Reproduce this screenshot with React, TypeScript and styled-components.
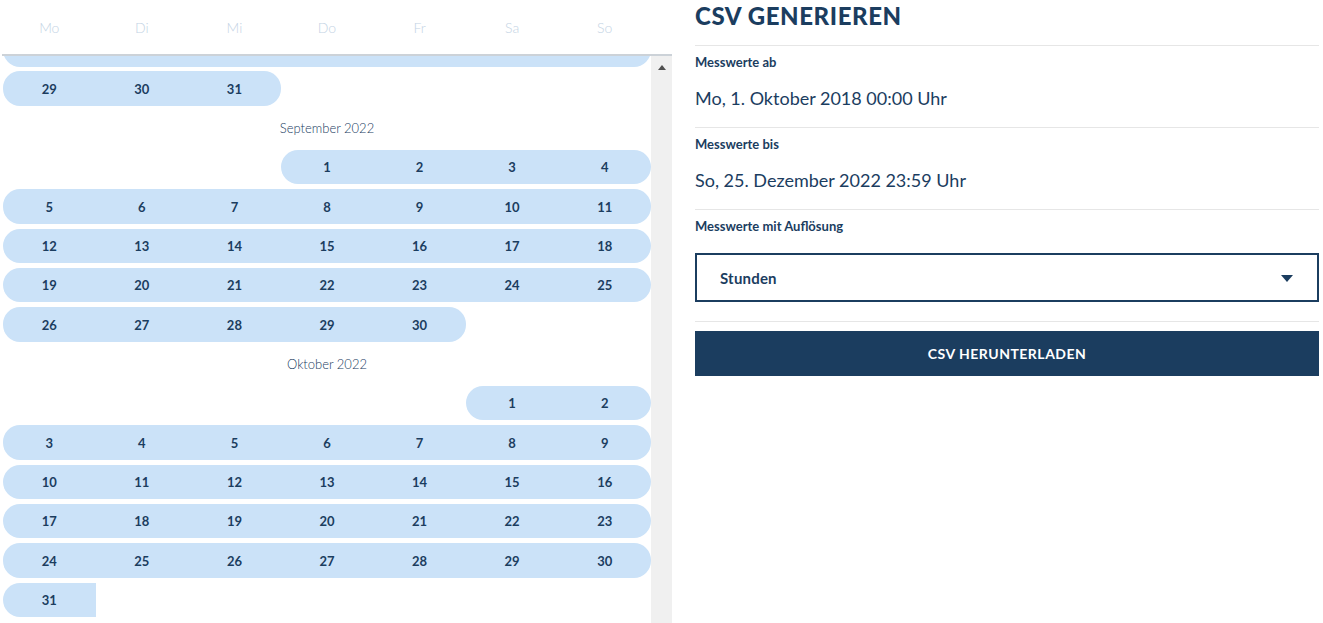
import { createGlobalStyle } from "styled-components";
import styled from "styled-components";

const NAVY = "#1b3d5f";
const PILL = "#cbe2f8";

const GlobalStyle = createGlobalStyle`
    html, body {
        margin: 0;
        padding: 0;
        background: #ffffff;
        font-family: "Lato", "Liberation Sans", sans-serif;
        color: ${NAVY};
    }
    * {
        box-sizing: border-box;
    }
`;

const Page = styled.div`
    display: flex;
    width: 1323px;
    height: 623px;
    overflow: hidden;
`;

const LeftPanel = styled.div`
    width: 672px;
    flex-shrink: 0;
    display: flex;
    flex-direction: column;
`;

const WeekdayHeader = styled.div`
    height: 56px;
    margin-left: 2px;
    padding-left: 1px;
    padding-right: 21px;
    border-bottom: solid 2px #ccd2d8;
    display: grid;
    grid-template-columns: repeat(7, 1fr);
    align-items: center;
`;

const WeekdayLabel = styled.div`
    text-align: center;
    font-size: 14px;
    font-weight: 300;
    color: #c3d3e4;
`;

const CalendarBody = styled.div`
    flex: 1;
    display: flex;
    min-height: 0;
`;

const CalendarList = styled.div`
    width: 651px;
    overflow: hidden;
    padding-left: 3px;
`;

/* the list is scrolled a little: the week 22-28 is mostly hidden */
const CalendarInner = styled.div`
    margin-top: -24px;
`;

const Scrollbar = styled.div`
    width: 21px;
    background: #f0f0f0;
    display: flex;
    justify-content: center;
    padding-top: 9px;
`;

const ArrowUp = styled.div`
    width: 0;
    height: 0;
    border-left: 4.5px solid transparent;
    border-right: 4.5px solid transparent;
    border-bottom: 5px solid #505050;
`;

const WeekRow = styled.div`
    height: 34.5px;
    margin-bottom: 4.83px;
    display: grid;
    grid-template-columns: repeat(7, 1fr);
`;

const Pill = styled.div<{ $start: number; $span: number; $openEnd?: boolean }>`
    grid-column: ${(p) => `${p.$start} / span ${p.$span}`};
    background: ${PILL};
    border-radius: ${(p) => (p.$openEnd ? "17px 0 0 17px" : "17px")};
    display: grid;
    grid-template-columns: repeat(${(p) => p.$span}, 1fr);
    align-items: center;
`;

const Day = styled.div`
    text-align: center;
    font-size: 13px;
    font-weight: 700;
    color: ${NAVY};
`;

const MonthTitle = styled.div`
    height: 34.5px;
    margin-bottom: 4.83px;
    display: flex;
    align-items: center;
    justify-content: center;
    font-size: 13px;
    font-weight: 300;
    color: ${NAVY};
`;

const RightPanel = styled.div`
    flex: 1;
    margin-left: 23px;
    margin-right: 4px;
    display: flex;
    flex-direction: column;
`;

const Title = styled.h1`
    margin: 0;
    padding-top: 1px;
    height: 46px;
    font-size: 24px;
    line-height: 30px;
    font-weight: 900;
    letter-spacing: 0.6px;
    color: ${NAVY};
    border-bottom: solid 1px #e6e6e6;
`;

const Field = styled.div`
    padding-top: 8px;
    padding-bottom: 17px;
    border-bottom: solid 1px #e6e6e6;
`;

const FieldLabel = styled.div`
    font-size: 13px;
    line-height: 16px;
    font-weight: 700;
    color: ${NAVY};
`;

const FieldValue = styled.div`
    margin-top: 16px;
    font-size: 18px;
    line-height: 24px;
    font-weight: 400;
    color: ${NAVY};
`;

const SelectBox = styled.div`
    margin-top: 19px;
    height: 49px;
    border: solid 2px ${NAVY};
    display: flex;
    align-items: center;
    justify-content: space-between;
    padding: 0 24px 0 23px;
    font-size: 15px;
    font-weight: 700;
    letter-spacing: 0.2px;
    color: ${NAVY};
`;

const Caret = styled.div`
    width: 0;
    height: 0;
    border-left: 6px solid transparent;
    border-right: 6px solid transparent;
    border-top: 7px solid ${NAVY};
    margin-top: 1px;
`;

const SelectField = styled(Field)`
    padding-bottom: 19px;
`;

const DownloadButton = styled.button`
    margin-top: 9px;
    height: 45px;
    border: none;
    background: ${NAVY};
    color: #ffffff;
    font-family: "Lato", "Liberation Sans", sans-serif;
    font-size: 14px;
    font-weight: 700;
    letter-spacing: 0.5px;
    cursor: pointer;
`;

const WEEKDAYS = ["Mo", "Di", "Mi", "Do", "Fr", "Sa", "So"];

type Week = { start: number; days: number[]; openEnd?: boolean };
type Block = { month?: string; weeks: Week[] };

const range = (a: number, b: number) =>
    Array.from({ length: b - a + 1 }, (_, i) => a + i);

const BLOCKS: Block[] = [
    {
        weeks: [
            { start: 1, days: range(22, 28) },
            { start: 1, days: range(29, 31) },
        ],
    },
    {
        month: "September 2022",
        weeks: [
            { start: 4, days: range(1, 4) },
            { start: 1, days: range(5, 11) },
            { start: 1, days: range(12, 18) },
            { start: 1, days: range(19, 25) },
            { start: 1, days: range(26, 30) },
        ],
    },
    {
        month: "Oktober 2022",
        weeks: [
            { start: 6, days: range(1, 2) },
            { start: 1, days: range(3, 9) },
            { start: 1, days: range(10, 16) },
            { start: 1, days: range(17, 23) },
            { start: 1, days: range(24, 30) },
            { start: 1, days: [31], openEnd: true },
        ],
    },
];

function Calendar() {
    return (
        <LeftPanel>
            <WeekdayHeader>
                {WEEKDAYS.map((d) => (
                    <WeekdayLabel key={d}>{d}</WeekdayLabel>
                ))}
            </WeekdayHeader>
            <CalendarBody>
                <CalendarList>
                    <CalendarInner>
                        {BLOCKS.map((block, bi) => (
                            <div key={bi}>
                                {block.month && <MonthTitle>{block.month}</MonthTitle>}
                                {block.weeks.map((w, wi) => (
                                    <WeekRow key={wi}>
                                        <Pill
                                            $start={w.start}
                                            $span={w.days.length}
                                            $openEnd={w.openEnd}
                                        >
                                            {w.days.map((d) => (
                                                <Day key={d}>{d}</Day>
                                            ))}
                                        </Pill>
                                    </WeekRow>
                                ))}
                            </div>
                        ))}
                    </CalendarInner>
                </CalendarList>
                <Scrollbar>
                    <ArrowUp />
                </Scrollbar>
            </CalendarBody>
        </LeftPanel>
    );
}

function CsvForm() {
    return (
        <RightPanel>
            <Title>CSV GENERIEREN</Title>
            <Field>
                <FieldLabel>Messwerte ab</FieldLabel>
                <FieldValue>Mo, 1. Oktober 2018 00:00 Uhr</FieldValue>
            </Field>
            <Field>
                <FieldLabel>Messwerte bis</FieldLabel>
                <FieldValue>So, 25. Dezember 2022 23:59 Uhr</FieldValue>
            </Field>
            <SelectField>
                <FieldLabel>Messwerte mit Auflösung</FieldLabel>
                <SelectBox>
                    Stunden
                    <Caret />
                </SelectBox>
            </SelectField>
            <DownloadButton>CSV HERUNTERLADEN</DownloadButton>
        </RightPanel>
    );
}

export default function App() {
    return (
        <>
            <GlobalStyle />
            <Page>
                <Calendar />
                <CsvForm />
            </Page>
        </>
    );
}
